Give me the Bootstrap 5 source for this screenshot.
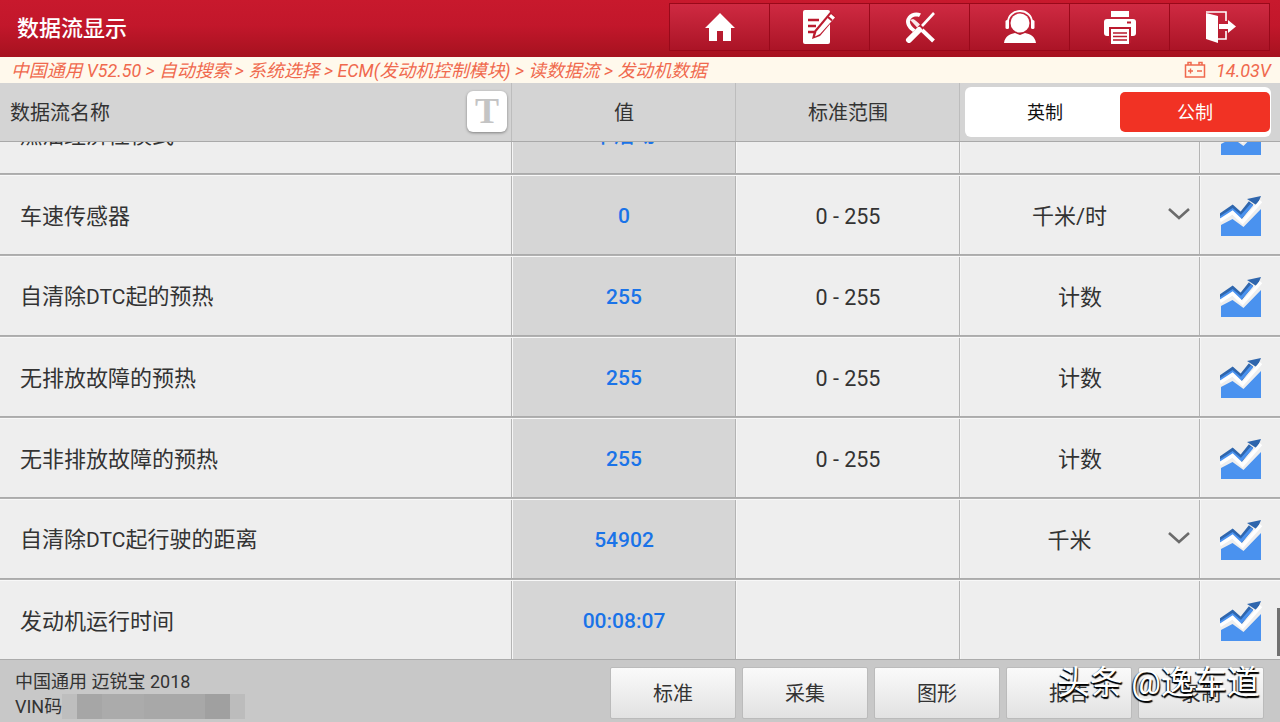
<!DOCTYPE html>
<html lang="zh"><head><meta charset="utf-8">
<link rel="stylesheet" href="https://cdn.jsdelivr.net/npm/bootstrap@5.3.0/dist/css/bootstrap.min.css">
<style>
html,body{height:722px;overflow:hidden;margin:0;background:#eee;}
body{font-family:Roboto,"Noto Sans CJK SC",sans-serif;color:#333;width:1280px;position:relative;}
.topbar{height:57px;background:linear-gradient(#c8192d 0%,#c2172b 45%,#a6121f 100%);}
.topbar h1{font-size:22px;font-weight:500;color:#fff;margin:0 0 0 17px;padding-top:1px;}
.tool-group{margin-right:10px;height:48px;margin-top:3px;border:1px solid #99091a;border-right:0;}
.tool-btn{width:100px;height:46px;border-right:1px solid #99091a;background:linear-gradient(#cf2a42,#ab1426);}
.crumb{height:26px;background:#fff9ec;color:#f0694e;font-style:italic;font-size:17.85px;padding:0 9px 0 11px;line-height:27px;}
.crumb .volt{font-size:18px;}
.volt svg{margin-right:10px;}
.headrow{height:59px;background:#d4d4d4;border-bottom:1px solid #a9a9a9;font-size:20px;}
.c-name{width:512px;}
.c-val{width:223px;margin-left:1px;}
.c-range{width:223px;margin-left:1px;}
.c-unit{width:239px;margin-left:1px;}
.c-chart{width:78px;margin-left:1px;}
.hsep{background:#d4d4d4;border-right:1px solid #bdbdbd;padding-top:1px;}
.headrow .c-name{padding:1px 0 0 10px;position:relative;border-right:1px solid #bdbdbd;}
.t-btn{position:absolute;left:467px;top:8px;width:40px;height:41px;background:#fff;border-radius:6px;box-shadow:0 1px 3px rgba(0,0,0,.4);color:#c4c4c4;font:bold 36px/41px "Liberation Serif",serif;text-align:center;}
.seg{width:306px;height:50px;margin:4px 0 0 5px;background:#fff;border-radius:6px;padding:5px 1px 5px 5px;}
.seg span{font-size:18px;color:#111;}
.seg .on{width:150px;height:40px;background:#f13224;border-radius:5px;color:#fff;}
.seg .off{width:150px;}
.rows{height:518px;overflow:hidden;background:#fff;position:relative;}
.rowline{height:81px;padding-bottom:3px;font-size:22px;background:linear-gradient(#f6f6f6 calc(100% - 3px),#a8a8a8 calc(100% - 3px),#b4b4b4 calc(100% - 1px),#f8f8f8 calc(100% - 1px));}
.rowline:first-child{margin-top:-47px;}
.rowline>div{background:#eee;height:78px;border-right:1px solid #b4b4b4;padding-top:2px;}
.rowline .c-val{background:#d6d6d6;color:#1a73e8;font-weight:500;font-size:21px;padding-top:4px;}
.rowline .c-name{padding-left:20px;color:#333;}
.rowline .c-range{font-size:21.5px;padding-top:4px;}
.rowline .c-chart{border-right:0;width:79px;}
.latin{font-size:21px;}
.chev{position:absolute;right:8px;top:31px;}
.c-unit{position:relative;}
.unit-l{padding-right:21px;}
.thumb{position:absolute;right:0;top:466px;width:3px;height:48px;background:#707070;}
.foot{height:62px;background:#c8c8c8;padding:7px 16px 3px 15px;}
.foot .info{font-size:18px;line-height:25px;color:#333;margin-top:2px;}
.vinblur{display:inline-block;width:183px;height:25px;vertical-align:top;background:linear-gradient(90deg,#bebebe 0 8%,#a6a6a6 8% 22%,#ababab 22% 45%,#a8a8a8 45% 78%,#a0a0a0 78% 92%,#bcbcbc 92%);}
.btn-gap{gap:6px;}
.fbtn{width:126px;height:52px;background:linear-gradient(#fafafa,#e2e2e2);border:1px solid #bbb;border-radius:2px;font-size:20px;color:#333;padding-top:1px;}
.mark-w{position:absolute;left:1057px;top:661px;font-size:33px;line-height:44px;color:#fff;text-shadow:1px 2px 1px #000,-1px 1px 1px #000;white-space:nowrap;}
</style></head><body>
<svg width="0" height="0" class="d-block position-absolute"><defs>
<symbol id="i-chart" viewBox="0 0 42 42">
<path fill="#4a92ef" d="M1 30 L12.500 24 L23.500 32 L41 14 V41 H1Z"/>
<path fill="none" stroke="#2f66ad" stroke-width="5.400" d="M0 21.500 L12.500 13 L21 20.500 L31 8"/>
<path fill="none" stroke="#4a92ef" stroke-width="3" d="M0 23 L12.500 14.800 L21 22 L32 9.500"/>
<path fill="#2f66ad" d="M27 4 L41 1 L37 10.500Z"/>
<path fill="none" stroke="#fff" stroke-width="3.400" d="M0 25.500 L12.500 17.500 L22.500 27 L41 6"/>
</symbol>
<symbol id="i-chev" viewBox="0 0 24 14"><path d="M2 2 L12 11 L22 2" fill="none" stroke="#6b6b6b" stroke-width="2.600"/></symbol>
</defs></svg>

<div class="topbar d-flex justify-content-between">
 <h1 class="d-flex align-items-center">数据流显示</h1>
 <div class="tool-group d-flex">
  <div class="tool-btn d-flex align-items-center justify-content-center"><svg width="32" height="32" viewBox="0 0 32 32"><path fill="#fff" d="M16 2 L31 17 H27 V30 H19 V20 H13 V30 H5 V17 H1Z"/></svg></div>
  <div class="tool-btn d-flex align-items-center justify-content-center"><svg width="36" height="36" viewBox="0 0 36 36"><rect x="1" y="1" width="27" height="34" rx="2" fill="#fff"/><path d="M6 11 H17 M6 17 H14 M6 23 H12" stroke="#bb1a2e" stroke-width="2.400"/><path fill="#bb1a2e" d="M28 3 L34 8 L18 27 L10 30 L12 22Z"/><path fill="#fff" d="M29 5 L33 8.500 L18 25 L13 27.500 L14.500 22.500Z"/><path d="M26 8 L30 11.500" stroke="#bb1a2e" stroke-width="2"/></svg></div>
  <div class="tool-btn d-flex align-items-center justify-content-center"><svg width="32" height="32" viewBox="0 0 32 32"><path fill="#fff" d="M17 2.500 A10.500 10.500 0 0 0 2 10 C2 14.500 4.500 18 9 21 L11.500 18.500 C7.500 15.500 5.500 12.500 6 10 C6.500 6.500 11 4.500 15 6 Z"/><path fill="#fff" d="M6 9 C9 12 11 14 13 16.500 L16 13.500 C13 10.500 11 9 9 8 Z" opacity=".9"/><path stroke="#fff" stroke-width="2.600" d="M30 2 L18 15"/><path stroke="#fff" stroke-width="6" stroke-linecap="round" d="M15 19 L5 29"/><path stroke="#fff" stroke-width="4" d="M18 19 L29.500 30"/></svg></div>
  <div class="tool-btn d-flex align-items-center justify-content-center"><svg width="34" height="34" viewBox="0 0 34 34"><circle cx="17" cy="13" r="9.500" fill="#fff"/><path fill="none" stroke="#fff" stroke-width="1.800" d="M5 15 V12 A12 11 0 0 1 29 12 V15"/><rect x="2.500" y="10" width="3.500" height="9" rx="1.500" fill="#fff"/><rect x="28" y="10" width="3.500" height="9" rx="1.500" fill="#fff"/><path fill="#fff" d="M1 33 C2 26 7 24 12 23 L17 25 L22 23 C27 24 32 26 33 33Z"/></svg></div>
  <div class="tool-btn d-flex align-items-center justify-content-center"><svg width="34" height="34" viewBox="0 0 34 34"><rect x="8" y="1" width="18" height="6" fill="#fff"/><rect x="1" y="9" width="32" height="17" rx="3" fill="#fff"/><rect x="6" y="17" width="22" height="16" fill="#bb1a2e"/><rect x="8" y="19" width="18" height="15" fill="#fff"/><path d="M10 23 H24 M10 26.500 H24 M10 30 H24" stroke="#bb1a2e" stroke-width="1.300"/><rect x="24" y="11.500" width="4" height="2" fill="#bb1a2e"/></svg></div>
  <div class="tool-btn d-flex align-items-center justify-content-center"><svg width="34" height="34" viewBox="0 0 34 34"><path fill="#fff" d="M3 3 L15 6 V33 L3 29Z"/><path fill="none" stroke="#fff" stroke-width="1.600" d="M3 2 H23 V11 M23 21 V29 H15"/><path fill="#fff" d="M16 14 H25 V10 L33 16.500 L25 23 V19 H16Z"/></svg></div>
 </div>
</div>
<div class="crumb d-flex justify-content-between">
 <span>中国通用 V52.50 &gt; 自动搜索 &gt; 系统选择 &gt; ECM(发动机控制模块) &gt; 读数据流 &gt; 发动机数据</span>
 <span class="volt d-flex align-items-center"><svg width="22" height="18" viewBox="0 0 22 18"><path fill="none" stroke="#f0694e" stroke-width="1.500" d="M1.500 4 H20.500 V16 H1.500Z M4 4 V1.500 H7 V4 M15 4 V1.500 H18 V4"/><path stroke="#f0694e" stroke-width="1.400" d="M4 10 H9 M6.500 7.500 V12.500 M13 10 H18"/></svg>14.03V</span>
</div>
<div class="headrow d-flex">
 <div class="c-name d-flex align-items-center">数据流名称<div class="t-btn">T</div></div>
 <div class="c-val hsep d-flex align-items-center justify-content-center">值</div>
 <div class="c-range hsep d-flex align-items-center justify-content-center">标准范围</div>
 <div class="seg d-flex align-items-center"><span class="off text-center">英制</span><span class="on d-flex align-items-center justify-content-center">公制</span></div>
</div>
<div class="rows">
 <div class="rowline d-flex"><div class="c-name d-flex align-items-center">燃油经济性模式</div><div class="c-val d-flex align-items-center justify-content-center">不活动</div><div class="c-range"></div><div class="c-unit"></div><div class="c-chart d-flex align-items-center justify-content-center"><svg width="42" height="42"><use href="#i-chart"/></svg></div></div>
 <div class="rowline d-flex"><div class="c-name d-flex align-items-center">车速传感器</div><div class="c-val d-flex align-items-center justify-content-center">0</div><div class="c-range d-flex align-items-center justify-content-center">0 - 255</div><div class="c-unit d-flex align-items-center justify-content-center"><span class="unit-l">千米/时</span><svg class="chev" width="24" height="14"><use href="#i-chev"/></svg></div><div class="c-chart d-flex align-items-center justify-content-center"><svg width="42" height="42"><use href="#i-chart"/></svg></div></div>
 <div class="rowline d-flex"><div class="c-name d-flex align-items-center"><span>自清除<span class="latin">DTC</span>起的预热</span></div><div class="c-val d-flex align-items-center justify-content-center">255</div><div class="c-range d-flex align-items-center justify-content-center">0 - 255</div><div class="c-unit d-flex align-items-center justify-content-center">计数</div><div class="c-chart d-flex align-items-center justify-content-center"><svg width="42" height="42"><use href="#i-chart"/></svg></div></div>
 <div class="rowline d-flex"><div class="c-name d-flex align-items-center">无排放故障的预热</div><div class="c-val d-flex align-items-center justify-content-center">255</div><div class="c-range d-flex align-items-center justify-content-center">0 - 255</div><div class="c-unit d-flex align-items-center justify-content-center">计数</div><div class="c-chart d-flex align-items-center justify-content-center"><svg width="42" height="42"><use href="#i-chart"/></svg></div></div>
 <div class="rowline d-flex"><div class="c-name d-flex align-items-center">无非排放故障的预热</div><div class="c-val d-flex align-items-center justify-content-center">255</div><div class="c-range d-flex align-items-center justify-content-center">0 - 255</div><div class="c-unit d-flex align-items-center justify-content-center">计数</div><div class="c-chart d-flex align-items-center justify-content-center"><svg width="42" height="42"><use href="#i-chart"/></svg></div></div>
 <div class="rowline d-flex"><div class="c-name d-flex align-items-center"><span>自清除<span class="latin">DTC</span>起行驶的距离</span></div><div class="c-val d-flex align-items-center justify-content-center">54902</div><div class="c-range"></div><div class="c-unit d-flex align-items-center justify-content-center"><span class="unit-l">千米</span><svg class="chev" width="24" height="14"><use href="#i-chev"/></svg></div><div class="c-chart d-flex align-items-center justify-content-center"><svg width="42" height="42"><use href="#i-chart"/></svg></div></div>
 <div class="rowline d-flex"><div class="c-name d-flex align-items-center">发动机运行时间</div><div class="c-val d-flex align-items-center justify-content-center">00:08:07</div><div class="c-range"></div><div class="c-unit"></div><div class="c-chart d-flex align-items-center justify-content-center"><svg width="42" height="42"><use href="#i-chart"/></svg></div></div>
 <div class="thumb"></div>
</div>
<div class="foot d-flex justify-content-between">
 <div class="info">中国通用 迈锐宝 2018<br>VIN码<span class="vinblur"></span></div>
 <div class="d-flex btn-gap align-items-start">
  <div class="fbtn d-flex align-items-center justify-content-center">标准</div>
  <div class="fbtn d-flex align-items-center justify-content-center">采集</div>
  <div class="fbtn d-flex align-items-center justify-content-center">图形</div>
  <div class="fbtn d-flex align-items-center justify-content-center">报告</div>
  <div class="fbtn d-flex align-items-center justify-content-center">录制</div>
 </div>
</div>
<div class="mark-w">头条 @逸车道</div>
</body></html>
